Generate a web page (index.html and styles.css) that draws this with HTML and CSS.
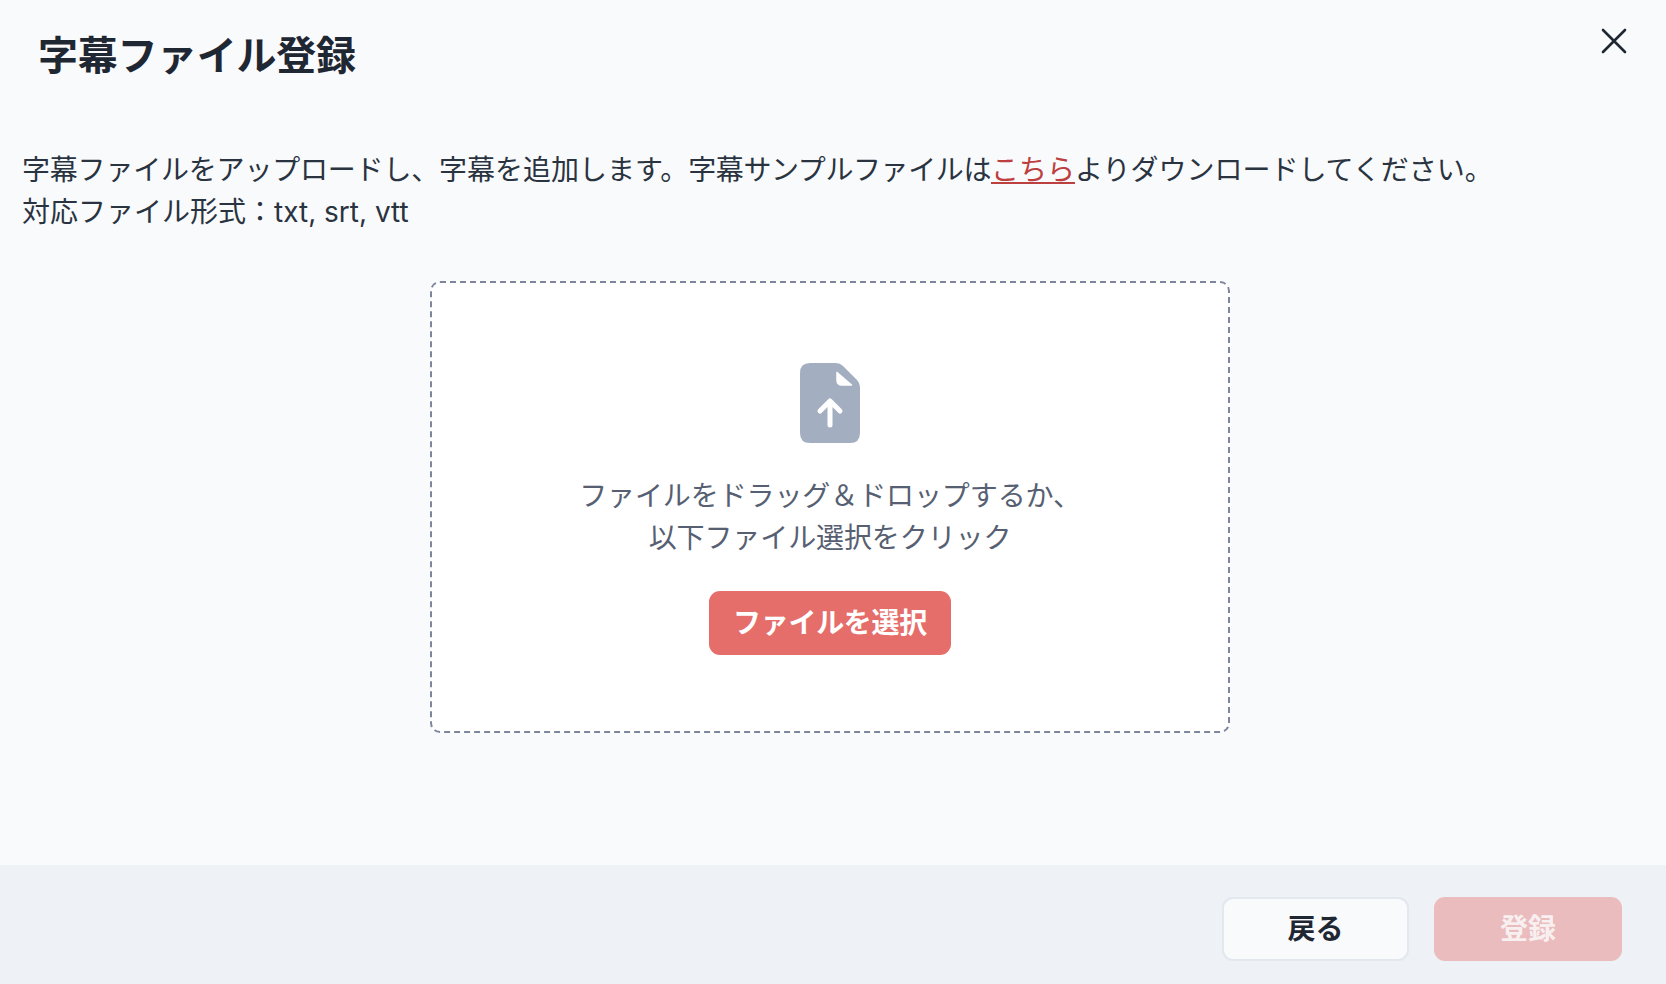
FILE: index.html
```html
<!DOCTYPE html>
<html lang="ja">
<head>
    <meta charset="UTF-8">
    <meta name="viewport" content="width=device-width, initial-scale=1.0">
    <title>字幕ファイル登録</title>
    <link rel="stylesheet" href="styles.css">
</head>
<body>
    <div class="modal">
        <div class="header">
            <h1>字幕ファイル登録</h1>
            <button class="close" aria-label="閉じる">
                <svg width="26" height="26" viewBox="0 0 26 26" fill="none" stroke="#1f2733" stroke-width="2.6" stroke-linecap="round">
                    <path d="M2 2L24 24M24 2L2 24"/>
                </svg>
            </button>
        </div>
        <div class="content">
            <p class="desc"><span class="tight">字幕ファイルをアップロードし、</span>字幕を追加します。<span class="tighter">字幕サンプルファイルは</span><a href="#">こちら</a>よりダウンロードしてください。<br>対応ファイル形式：txt, srt, vtt</p>
            <div class="dropzone">
                <svg class="file-icon" width="60" height="80" viewBox="0 0 60 80">
                    <path fill="#a3afc0" d="M10 0H36Q40 0 43 3L57 17Q60 20 60 24V70Q60 80 50 80H10Q0 80 0 70V10Q0 0 10 0Z"/>
                    <path fill="#fff" d="M37 9.5V17Q37 22 42 22H51.5Z" stroke="#fff" stroke-width="1.5" stroke-linejoin="round"/>
                    <path fill="none" stroke="#fff" stroke-width="5" stroke-linecap="round" stroke-linejoin="round" d="M30 62V38M20 48L30 38L40 48"/>
                </svg>
                <p class="hint">ファイルをドラッグ＆ドロップするか、<br>以下ファイル選択をクリック</p>
                <button class="select-btn">ファイルを選択</button>
            </div>
        </div>
        <div class="footer">
            <button class="back-btn">戻る</button>
            <button class="submit-btn">登録</button>
        </div>
    </div>
</body>
</html>
```

FILE: styles.css
```css
* {
    box-sizing: border-box;
}
body {
    margin: 0;
    font-family: Inter, "Noto Sans CJK JP", sans-serif;
    color: #1f2733;
    background-color: #f9fafc;
}
button {
    font-family: inherit;
    cursor: pointer;
    padding: 0 0 4px;
}
.modal {
    display: flex;
    flex-direction: column;
    height: 984px;
}
.header {
    display: flex;
    justify-content: space-between;
    align-items: flex-start;
    padding: 29px 39px 0 38px;
    height: 149px;
}
.header h1 {
    margin: 0;
    font-size: 40px;
    line-height: 54px;
    font-weight: 700;
    letter-spacing: -0.3px;
}
.close {
    background: none;
    border: none;
    padding: 0;
    margin-top: -1px;
    height: 26px;
}
.content {
    flex: 1;
    padding: 0 22px;
}
.desc {
    margin: 0;
    font-size: 28px;
    line-height: 42.25px;
    color: #2a3340;
}
.desc a {
    color: #bd4040;
}
.tight {
    letter-spacing: -0.2px;
}
.tighter {
    letter-spacing: -0.4px;
}
.dropzone {
    display: flex;
    flex-direction: column;
    align-items: center;
    width: 800px;
    height: 452px;
    margin: 47px 0 0 408px;
    padding-top: 80px;
    background: #fff;
    border: 2px dashed #7d869c;
    border-radius: 10px;
}
.hint {
    margin: 32px 0 32px;
    text-align: center;
    font-size: 28px;
    line-height: 42.25px;
    letter-spacing: -0.1px;
    color: #566072;
}
.select-btn {
    width: 242px;
    height: 64px;
    border: none;
    border-radius: 11px;
    background: #e56e6b;
    color: #fff;
    font-size: 28px;
    font-weight: 700;
    letter-spacing: -0.3px;
}
.footer {
    display: flex;
    justify-content: flex-end;
    gap: 25px;
    height: 119px;
    padding: 32px 44px 0 0;
    background: #eef1f6;
}
.back-btn,
.submit-btn {
    height: 64px;
    border-radius: 11px;
    font-size: 28px;
    font-weight: 700;
}
.back-btn {
    width: 187px;
    background: #f9fafc;
    border: 2px solid #e3e7ee;
    color: #1f2733;
}
.submit-btn {
    width: 188px;
    background: #ebbcbd;
    border: none;
    color: #f8eff1;
}
```
